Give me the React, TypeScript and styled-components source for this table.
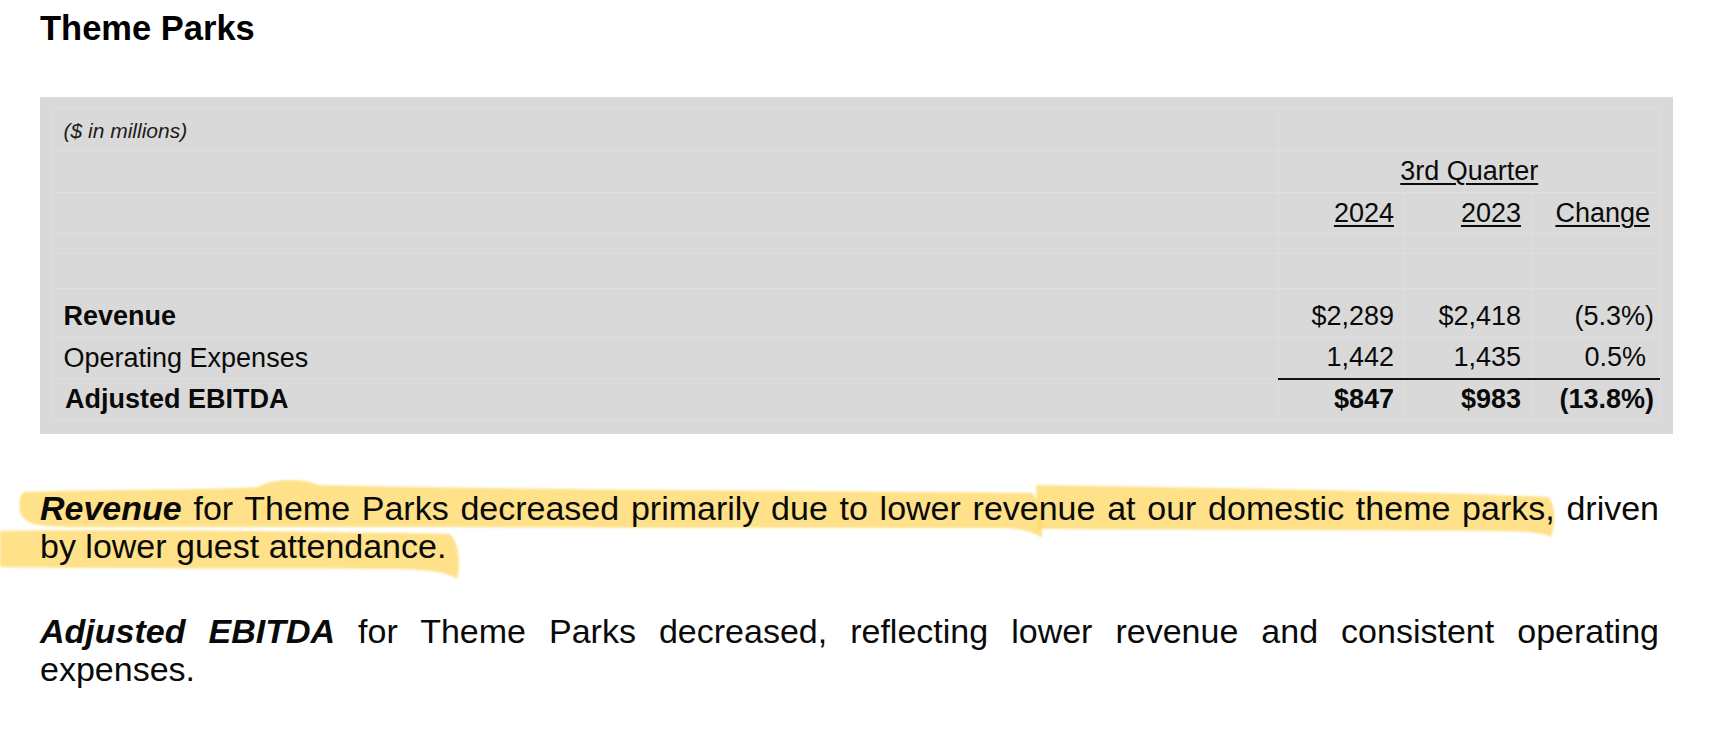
import React from "react";
import styled, { createGlobalStyle, css } from "styled-components";

const GlobalStyle = createGlobalStyle`
  body {
    margin: 0;
    background: #ffffff;
    color: #000000;
    font-family: "Liberation Sans", Arial, Helvetica, sans-serif;
  }
`;

const Page = styled.div`
  width: 1720px;
  padding-top: 8px;
`;

const Title = styled.h2`
  margin: 0 0 0 40px;
  font-size: 34.5px;
  line-height: 41px;
  font-weight: 700;
`;

const Panel = styled.div`
  box-sizing: border-box;
  width: 1633px;
  margin: 47.5px 0 0 40px;
  padding: 11.5px 13px 13px 12px;
  background: #d9d9d9;
`;

const Table = styled.table`
  width: 100%;
  table-layout: fixed;
  border-collapse: collapse;
  font-size: 27px;
  line-height: 31px;
  color: #0a0a0a;
`;

const Row = styled.tr<{ $h: number }>`
  height: ${(p) => p.$h}px;
`;

const Cell = styled.td<{
  $align?: "left" | "right" | "center";
  $bold?: boolean;
  $rule?: boolean;
  $hang?: number;
  $bottom?: boolean;
  $indent?: boolean;
}>`
  box-sizing: border-box;
  padding: 0 10px 0 ${(p) => (p.$indent ? 12 : 10.5)}px;
  border: 1px solid #dfdfdf;
  text-align: ${(p) => p.$align || "left"};
  vertical-align: ${(p) => (p.$bottom ? "bottom" : "middle")};
  font-weight: ${(p) => (p.$bold ? 700 : 400)};
  white-space: nowrap;
  ${(p) =>
    p.$bottom &&
    css`
      padding-bottom: 5px;
    `}
  ${(p) =>
    p.$hang !== undefined &&
    css`
      padding-right: ${p.$hang}px;
    `}
  ${(p) =>
    p.$rule &&
    css`
      border-top: 2px solid #111111;
    `}
`;

const Units = styled.span`
  font-size: 21px;
  font-style: italic;
  color: #1c1c1c;
`;

const Head = styled.span`
  text-decoration: underline;
  text-decoration-thickness: 1.5px;
  text-underline-offset: 3px;
`;

const Notes = styled.section`
  position: relative;
  margin-top: 55px;
  padding-left: 40px;
`;

const Marker = styled.svg`
  position: absolute;
  left: 0;
  top: -18px;
  width: 1720px;
  height: 130px;
  pointer-events: none;
  z-index: 0;
`;

const Note = styled.p`
  position: relative;
  z-index: 1;
  width: 1619px;
  margin: 0;
  font-size: 34px;
  line-height: 38px;
  text-align: justify;
  color: #0a0a0a;
  & + & {
    margin-top: 47px;
  }
`;

const Lead = styled.b`
  font-style: italic;
  font-weight: 700;
`;

type Line = {
  label: string;
  bold?: boolean;
  values: [string, string, string];
  hang?: number;
  rule?: boolean;
  h: number;
  bottom?: boolean;
};

const lines: Line[] = [
  { label: "Revenue", bold: true, values: ["$2,289", "$2,418", "(5.3%)"], h: 49, bottom: true },
  { label: "Operating Expenses", values: ["1,442", "1,435", "0.5%"], hang: 13, h: 41 },
  { label: "Adjusted EBITDA", bold: true, values: ["$847", "$983", "(13.8%)"], rule: true, h: 42 },
];

const Highlights = () => (
  <Marker viewBox="0 470 1720 130" aria-hidden="true">
    <defs>
      <filter id="soft" x="-5%" y="-20%" width="110%" height="140%">
        <feGaussianBlur stdDeviation="1.3" />
      </filter>
    </defs>
    <g fill="#fdd55a" fillOpacity={0.72} filter="url(#soft)">
      <path d="M 24 491 C 120 488 220 489 258 486 C 272 478 300 476 318 484 C 520 489 820 490 1032 492 C 1040 500 1043 520 1042 537 C 1034 531 1022 528 1005 527 C 720 527 330 526 70 526 C 40 526 22 523 20 510 C 19 500 20 494 24 491 Z" />
      <path d="M 1036 484 C 1220 487 1420 490 1548 496 C 1556 505 1556 520 1551 536 C 1540 531 1520 530 1498 530 C 1320 529 1170 529 1038 528 Z" />
      <path d="M 0 530 C 110 528 300 530 450 533 C 459 542 461 562 457 578 C 448 571 426 568 387 568 C 260 567 110 568 0 566 Z" />
    </g>
  </Marker>
);

export default function App() {
  return (
    <Page>
      <GlobalStyle />
      <Title>Theme Parks</Title>
      <Panel>
        <Table>
          <colgroup>
            <col />
            <col style={{ width: 126 }} />
            <col style={{ width: 127 }} />
            <col style={{ width: 128 }} />
          </colgroup>
          <tbody>
            <Row $h={42}>
              <Cell>
                <Units>($ in millions)</Units>
              </Cell>
              <Cell colSpan={3} />
            </Row>
            <Row $h={42}>
              <Cell />
              <Cell colSpan={3} $align="center">
                <Head>3rd Quarter</Head>
              </Cell>
            </Row>
            <Row $h={41}>
              <Cell />
              <Cell $align="right">
                <Head>2024</Head>
              </Cell>
              <Cell $align="right">
                <Head>2023</Head>
              </Cell>
              <Cell $align="right" $hang={9}>
                <Head>Change</Head>
              </Cell>
            </Row>
            <Row $h={20}>
              <Cell />
              <Cell />
              <Cell />
              <Cell />
            </Row>
            <Row $h={35}>
              <Cell />
              <Cell />
              <Cell />
              <Cell />
            </Row>
            {lines.map((l) => (
              <Row key={l.label} $h={l.h}>
                <Cell $bold={l.bold} $bottom={l.bottom} $indent={l.rule}>
                  {l.label}
                </Cell>
                {l.values.map((v, i) => (
                  <Cell
                    key={i}
                    $align="right"
                    $bold={l.bold && l.rule}
                    $rule={l.rule}
                    $bottom={l.bottom}
                    $hang={i === 2 ? (l.hang ?? 5) : undefined}
                  >
                    {v}
                  </Cell>
                ))}
              </Row>
            ))}
          </tbody>
        </Table>
      </Panel>
      <Notes>
        <Highlights />
        <Note>
          <Lead>Revenue</Lead> for Theme Parks decreased primarily due to lower revenue at our
          domestic theme parks, driven by lower guest attendance.
        </Note>
        <Note>
          <Lead>Adjusted EBITDA</Lead> for Theme Parks decreased, reflecting lower revenue and
          consistent operating expenses.
        </Note>
      </Notes>
    </Page>
  );
}
